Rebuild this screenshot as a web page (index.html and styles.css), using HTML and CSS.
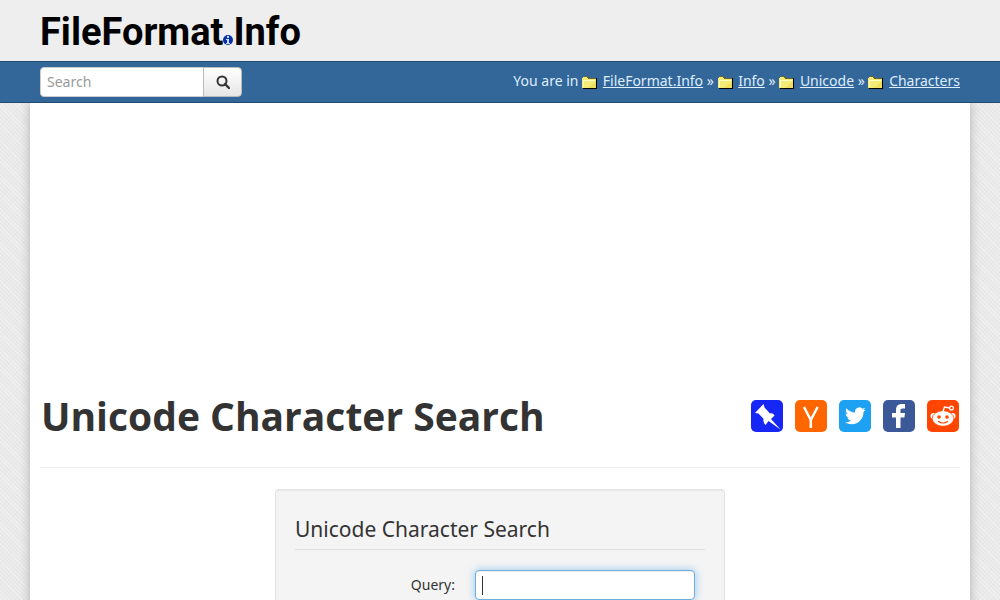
FILE: index.html
```html
<!DOCTYPE html>
<html lang="en">
<head>
    <meta charset="UTF-8">
    <meta name="viewport" content="width=device-width, initial-scale=1.0">
    <title>Unicode Character Search</title>
    <link rel="stylesheet" href="styles.css">
</head>
<body>
    <svg class="defs" aria-hidden="true">
        <symbol id="folder" viewBox="0 0 15 13">
            <path d="M1 13h14V2h-1v10H1z" fill="#000"/>
            <path d="M0 2h1V1h1V0h4v1h1v1h7v10H0z" fill="#f5ec78"/>
            <path d="M2 0h4v1h1v1h7v1H6V2H5V1H2z" fill="#6b6530"/>
            <path d="M1 4h12v1H2v6H1z" fill="#fffcc4"/>
            <path d="M6 12l8-7v7z" fill="#efdf60"/>
        </symbol>
    </svg>

    <header class="masthead">
        <div class="container">
            <a class="logo" href="#" aria-label="FileFormat.Info">FileFormat<svg class="logo-dot" viewBox="0 0 10 10"><circle cx="5" cy="5" r="5" fill="#0a2fa8"/><path d="M4 1h2v2H4zM3 4h3v4h1v1H3V8h1V5H3z" fill="#bfe0ff"/></svg>Info</a>
        </div>
    </header>

    <nav class="navbar">
        <div class="container navbar-inner">
            <form class="search">
                <input type="text" placeholder="Search" aria-label="Search">
                <button type="submit" aria-label="Search">
                    <svg width="14" height="14" viewBox="0 0 14 14"><circle cx="6" cy="6" r="4.5" fill="none" stroke="#333" stroke-width="2"/><path d="M9 9l4 4" stroke="#333" stroke-width="2.4" stroke-linecap="round"/></svg>
                </button>
            </form>
            <div class="crumbs">
                You are in
                <svg class="folder"><use href="#folder"/></svg> <a href="#">FileFormat.Info</a> »
                <svg class="folder"><use href="#folder"/></svg> <a href="#">Info</a> »
                <svg class="folder"><use href="#folder"/></svg> <a href="#">Unicode</a> »
                <svg class="folder"><use href="#folder"/></svg> <a href="#">Characters</a>
            </div>
        </div>
    </nav>

    <main class="page">
        <div class="ad"></div>

        <div class="page-header">
            <h1>Unicode Character Search</h1>
            <div class="share">
                <a href="#" aria-label="Pinboard">
                    <svg viewBox="0 0 32 32"><rect width="32" height="32" rx="5" fill="#1627f5"/><path d="M12.500 4l1 3.500 5.500 6c2-.5 3.500.5 4.500 2L20 19l9.500 10.500L17.500 21 14.500 25c-1.500-1.500-2.500-3.500-2-6.300L7.500 13.500 4 13z" fill="#fff"/></svg>
                </a>
                <a href="#" aria-label="Hacker News">
                    <svg viewBox="0 0 32 32"><rect width="32" height="32" rx="5" fill="#f60"/><path d="M9 7l6.800 13L22.600 7M15.800 19v9" fill="none" stroke="#fff" stroke-width="2.500"/></svg>
                </a>
                <a href="#" aria-label="Twitter">
                    <svg viewBox="0 0 32 32"><rect width="32" height="32" rx="5" fill="#1da1f2"/><path transform="translate(6 5.500) scale(.86)" d="M23.950 4.570a10 10 0 0 1-2.820.77 4.960 4.960 0 0 0 2.160-2.720c-.95.55-2 .95-3.130 1.180a4.920 4.920 0 0 0-8.380 4.480C7.690 8.090 4.070 6.130 1.640 3.160a4.820 4.820 0 0 0-.67 2.480c0 1.710.87 3.210 2.190 4.100a4.900 4.900 0 0 1-2.230-.62v.06a4.920 4.920 0 0 0 3.950 4.830 5 5 0 0 1-2.210.08 4.940 4.940 0 0 0 4.600 3.420A9.870 9.870 0 0 1 0 19.540a13.990 13.990 0 0 0 7.550 2.210c9.050 0 14-7.500 14-13.980l-.02-.64a9.940 9.940 0 0 0 2.460-2.550z" fill="#fff"/></svg>
                </a>
                <a href="#" aria-label="Facebook">
                    <svg viewBox="0 0 32 32"><rect width="32" height="32" rx="5" fill="#3b5998"/><path d="M13 28V17.500H9V13h4v-3c0-4 2-6 6-6h3v4.500h-2.500c-1.500 0-2 .7-2 2V13h4.500l-.6 4.500h-3.900V28z" fill="#fff"/></svg>
                </a>
                <a href="#" aria-label="Reddit">
                    <svg viewBox="0 0 32 32">
                        <rect width="32" height="32" rx="5" fill="#ff4500"/>
                        <circle cx="6.500" cy="16" r="3" fill="#fff"/>
                        <circle cx="25.500" cy="16" r="3" fill="#fff"/>
                        <ellipse cx="16" cy="18.500" rx="10.800" ry="7.800" fill="#fff" stroke="#ff4500" stroke-width=".8"/>
                        <path d="M16 11.500l1.500-4.500 5.500 1" fill="none" stroke="#fff" stroke-width="1.400"/>
                        <circle cx="24.500" cy="8" r="1.900" fill="none" stroke="#fff" stroke-width="1.300"/>
                        <circle cx="12" cy="17" r="1.800" fill="#ff4500"/>
                        <circle cx="20" cy="17" r="1.800" fill="#ff4500"/>
                        <path d="M11.500 21.500c2.500 2 6.500 2 9 0" fill="none" stroke="#ff4500" stroke-width="1.200" stroke-linecap="round"/>
                    </svg>
                </a>
            </div>
        </div>

        <form class="well">
            <h2>Unicode Character Search</h2>
            <div class="control-group">
                <label for="query">Query:</label>
                <input type="text" id="query" autofocus>
            </div>
        </form>
    </main>
</body>
</html>
```

FILE: styles.css
```css
* {
    box-sizing: border-box;
}

body {
    margin: 0;
    font-family: "Noto Sans", "Open Sans", sans-serif;
    font-size: 14px;
    line-height: 20px;
    color: #333;
    background-color: #e9e9e9;
    background-image:
        repeating-linear-gradient(45deg, rgba(255,255,255,0.3) 0, rgba(255,255,255,0.3) 1px, transparent 1px, transparent 3px),
        repeating-linear-gradient(-45deg, rgba(0,0,0,0.01) 0, rgba(0,0,0,0.01) 1px, transparent 1px, transparent 3px);
}

.defs {
    display: none;
}

.container {
    max-width: 940px;
    margin: 0 auto;
    padding: 0 10px;
}

.masthead {
    background: #eee;
    height: 61px;
    padding-top: 12px;
}

.logo {
    display: block;
    font-family: Roboto, sans-serif;
    font-size: 38px;
    font-weight: bold;
    line-height: 40px;
    color: #000;
    text-decoration: none;
    white-space: nowrap;
}

.logo-dot {
    width: 10px;
    height: 10px;
}

.navbar {
    position: relative;
    background: #369;
    border-top: 1px solid #244a70;
    border-bottom: 1px solid #244a70;
}

.navbar-inner {
    display: flex;
    justify-content: space-between;
    padding-top: 5px;
    padding-bottom: 5px;
}

.search {
    display: flex;
}

input {
    height: 30px;
    padding: 3px 6px 5px;
    font: inherit;
    color: #555;
    background: #fff;
    border: 1px solid #ccc;
    border-radius: 4px;
    outline: 0;
}

.search input {
    width: 164px;
    border-radius: 4px 0 0 4px;
}

input::placeholder {
    color: #999;
}

.search button {
    width: 39px;
    height: 30px;
    margin-left: -1px;
    padding: 2px 0 0;
    background: linear-gradient(#fff, #e6e6e6);
    border: 1px solid #bbb;
    border-radius: 0 4px 4px 0;
    cursor: pointer;
}

.crumbs {
    padding-top: 4px;
    color: #def;
}

.crumbs a {
    color: #def;
}

.folder {
    width: 15px;
    height: 13px;
    vertical-align: -3px;
    margin-right: 2px;
}

.page {
    max-width: 940px;
    margin: 0 auto;
    padding: 0 10px 40px;
    background: #fff;
    box-shadow: 0 0 10px rgba(0,0,0,0.25);
}

.ad {
    height: 280px;
}

.page-header {
    display: flex;
    justify-content: space-between;
    align-items: center;
    height: 85px;
    margin-bottom: 21px;
    padding: 0 1px 19px;
    border-bottom: 1px solid #eee;
}

h1 {
    margin: 0;
    font-family: "Open Sans", sans-serif;
    font-size: 39px;
    line-height: 40px;
}

.share {
    display: flex;
    gap: 12px;
}

.share svg {
    display: block;
    width: 32px;
    height: 32px;
}

.well {
    max-width: 450px;
    margin: 0 auto;
    padding: 19px;
    background: #f4f4f4;
    border: 1px solid #e3e3e3;
    border-radius: 4px;
    box-shadow: inset 0 1px 1px rgba(0,0,0,0.05);
}

.well h2 {
    margin: 0 0 20px;
    font-size: 21px;
    font-weight: normal;
    line-height: 40px;
    border-bottom: 1px solid #e0e0e0;
}

.control-group {
    display: flex;
    gap: 20px;
    margin-bottom: 20px;
}

.control-group label {
    width: 160px;
    padding-top: 5px;
    text-align: right;
}

.control-group input {
    width: 220px;
}

.control-group input:focus {
    caret-color: transparent;
    background: linear-gradient(#333, #333) 6px 5px / 1px 19px no-repeat #fff;
    border-color: #6faee0;
    box-shadow: inset 0 1px 1px rgba(0,0,0,0.075), 0 0 8px rgba(82,168,236,0.6);
}

.control-group input:not(:placeholder-shown):valid:focus {
    caret-color: auto;
}
```
